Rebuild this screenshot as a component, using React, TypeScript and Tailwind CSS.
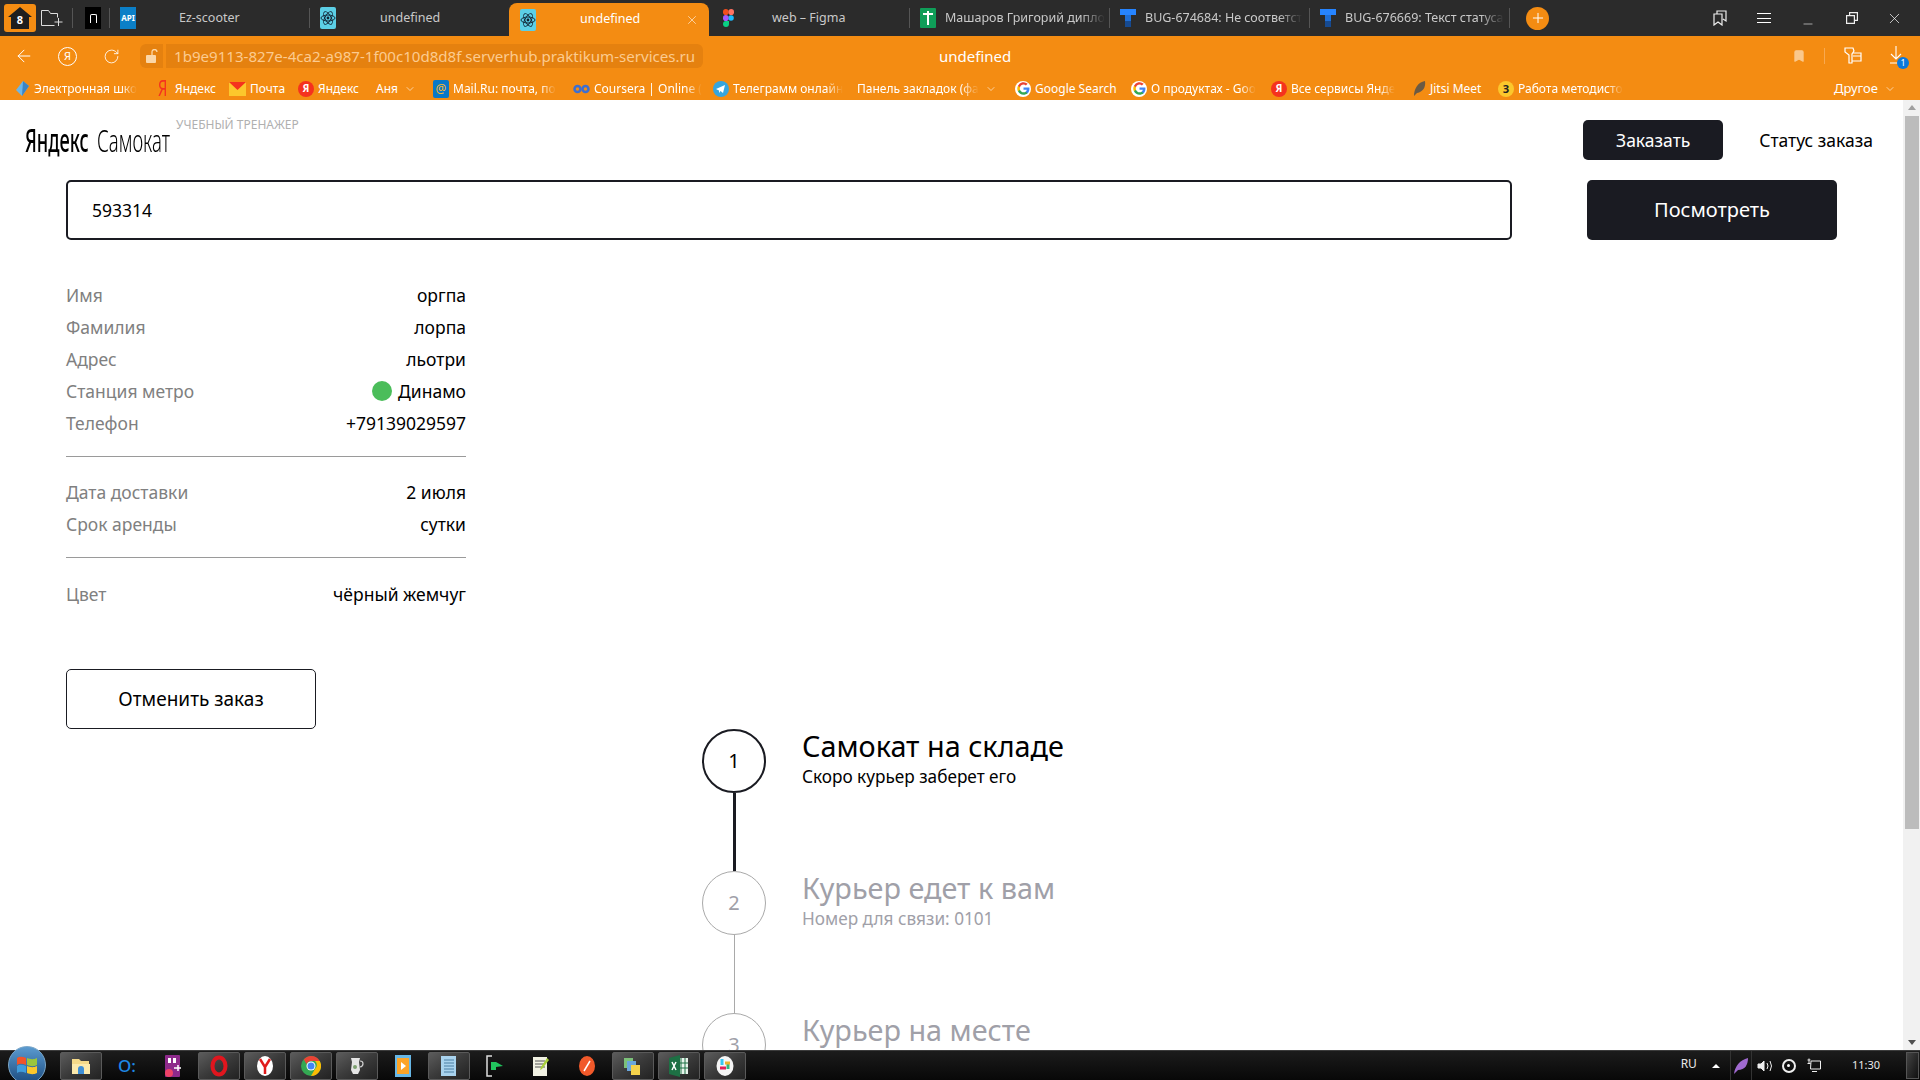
import { ArrowLeft, Bookmark, ChevronDown, Minus, Plus, RotateCw, X } from "lucide-react";
import type { ReactNode } from "react";

const UI_FONT = "font-['Noto_Sans',sans-serif]";
const FADE = "[mask-image:linear-gradient(to_right,black_85%,transparent)]";

function ReactIcon() {
  return (
    <svg width="16" height="22" viewBox="0 0 16 22">
      <rect width="16" height="22" rx="2" fill="#5ccfe6" />
      <g fill="none" stroke="#123" strokeWidth="0.9">
        <ellipse cx="8" cy="11" rx="7" ry="3" />
        <ellipse cx="8" cy="11" rx="7" ry="3" transform="rotate(60 8 11)" />
        <ellipse cx="8" cy="11" rx="7" ry="3" transform="rotate(120 8 11)" />
      </g>
      <circle cx="8" cy="11" r="1.4" fill="#123" />
    </svg>
  );
}

function FigmaIcon() {
  return (
    <svg width="11" height="18" viewBox="0 0 11 18">
      <circle cx="8" cy="9" r="2.8" fill="#1abcfe" />
      <path d="M3 12h3v3a3 3 0 1 1-3-3z" fill="#0acf83" />
      <rect y="6" width="5.6" height="6" rx="2.8" fill="#a259ff" />
      <rect width="5.6" height="6" rx="2.8" fill="#f24e1e" />
      <rect x="5.4" width="5.6" height="6" rx="2.8" fill="#ff7262" />
    </svg>
  );
}

function SheetIcon() {
  return (
    <svg width="16" height="20" viewBox="0 0 16 20">
      <rect width="16" height="20" rx="1" fill="#0f9d58" />
      <path d="M3 6h10M8 3v14" stroke="#fff" strokeWidth="2" />
    </svg>
  );
}

function TrackerIcon() {
  return (
    <svg width="16" height="18" viewBox="0 0 16 18">
      <rect width="16" height="6" fill="#2684ff" />
      <rect x="5" y="6" width="6" height="6" fill="#1f6fd6" />
      <rect x="5" y="12" width="6" height="6" fill="#164a91" />
    </svg>
  );
}

type Tab = { title: string; icon: ReactNode; textClass: string };

const tabs: Tab[] = [
  {
    title: "Ez-scooter",
    icon: (
      <span className="flex h-[22px] w-4 items-center justify-center bg-[#0b7fc7] text-[8px] font-bold text-white">API</span>
    ),
    textClass: "ml-[43px]",
  },
  { title: "undefined", icon: <ReactIcon />, textClass: "ml-[44px]" },
];

const rightTabs: Tab[] = [
  { title: "Машаров Григорий дипло", icon: <SheetIcon />, textClass: `ml-[9px] ${FADE}` },
  { title: "BUG-674684: Не соответст", icon: <TrackerIcon />, textClass: `ml-[9px] ${FADE}` },
  { title: "BUG-676669: Текст статуса", icon: <TrackerIcon />, textClass: `ml-[9px] ${FADE}` },
];

function TabItem({ tab }: { tab: Tab }) {
  return (
    <div className="flex h-[36px] w-[199px] shrink-0 items-center pl-[10px]">
      <div className="flex w-4 shrink-0 justify-center">{tab.icon}</div>
      <span className={`whitespace-nowrap pt-px text-[12.5px] text-[#c9c9c9] ${tab.textClass}`}>{tab.title}</span>
    </div>
  );
}

function Sep() {
  return <div className="h-5 w-px shrink-0 bg-[#555]" />;
}

function TabBar() {
  return (
    <div className={`flex h-[36px] shrink-0 items-center bg-[#2b2b2b] ${UI_FONT}`}>
      <div className="ml-1 flex h-7 w-8 items-center justify-center rounded-[3px] bg-[#f48c12]">
        <svg width="26" height="24" viewBox="0 0 26 24">
          <path d="M13 1 25 11h-3v12H4V11H1z" fill="#1e1e1e" />
          <text x="13" y="18" textAnchor="middle" fontSize="11" fontWeight="700" fill="#fff" fontFamily="Noto Sans">8</text>
        </svg>
      </div>
      <svg className="ml-[5px]" width="22" height="18" viewBox="0 0 22 18" fill="none" stroke="#ddd" strokeWidth="1">
        <path d="M.5 16.500V1.500h7l2 3h7v4M.5 16.500h13M17.500 9v8M13.500 13h8" />
      </svg>
      <div className="ml-[9px]"><Sep /></div>
      <div className="ml-3 flex h-[22px] w-4 items-center justify-center bg-black">
        <div className="h-[9px] w-[7px] rounded-t-[2px] border-x border-t border-white" />
      </div>
      <div className="ml-2"><Sep /></div>
      <TabItem tab={tabs[0]} />
      <Sep />
      <TabItem tab={tabs[1]} />
      <div className="mt-[3px] flex h-[33px] w-[200px] shrink-0 items-center rounded-t-[8px] bg-[#f48c12] pl-[11px]">
        <ReactIcon />
        <span className="ml-[44px] text-[12.5px] text-white">undefined</span>
        <X className="ml-auto mr-[10px] h-[14px] w-[14px] text-white" strokeWidth={1} />
      </div>
      <div className="flex h-[36px] w-[200px] shrink-0 items-center pl-[14px]">
        <FigmaIcon />
        <span className="ml-[38px] pt-px text-[12.5px] text-[#c9c9c9]">web – Figma</span>
      </div>
      {rightTabs.map((t) => (
        <div key={t.title} className="flex items-center">
          <Sep />
          <TabItem tab={t} />
        </div>
      ))}
      <Sep />
      <div className="ml-[16px] flex h-[23px] w-[23px] items-center justify-center rounded-full bg-[#f48c12]">
        <Plus className="h-4 w-4 text-white" strokeWidth={1.5} />
      </div>
      <div className="ml-auto flex items-center pr-[2px] text-white">
        <div className="flex w-[44px] justify-center">
          <svg width="14" height="16" viewBox="0 0 14 16" fill="none" stroke="#eee" strokeWidth="1.2">
            <path d="M1 4h8v11L5 12l-4 3zM4 4V1h9v10l-3-2" />
          </svg>
        </div>
        <div className="flex w-[44px] justify-center">
          <div className="flex h-[10px] w-[14px] flex-col justify-between">
            <div className="h-px bg-white" />
            <div className="h-px bg-white" />
            <div className="h-px bg-white" />
          </div>
        </div>
        <div className="flex w-[44px] justify-center">
          <Minus className="mt-3 h-[14px] w-[14px]" strokeWidth={1} />
        </div>
        <div className="flex w-[44px] justify-center">
          <svg width="12" height="12" viewBox="0 0 12 12" fill="none" stroke="#eee" strokeWidth="1.2">
            <path d="M.6 3.600h7.800v7.800H.6zM3.600 3.600V.6h7.800v7.800H8.400" />
          </svg>
        </div>
        <div className="flex w-[44px] justify-center pr-[4px]">
          <X className="h-[17px] w-[17px]" strokeWidth={1} />
        </div>
      </div>
    </div>
  );
}

function AddressBar() {
  return (
    <div className={`flex h-[40px] shrink-0 items-center bg-[#f48c12] pl-[14px] ${UI_FONT}`}>
      <ArrowLeft className="h-5 w-5 text-white" strokeWidth={1.2} />
      <div className="ml-[24px] flex h-[19px] w-[19px] items-center justify-center rounded-full border border-white text-[11px] text-white">Я</div>
      <RotateCw className="ml-[26px] h-[17px] w-[17px] text-white" strokeWidth={1.2} />
      <div className="ml-[20px] flex h-6 w-[23px] items-center justify-center rounded-l-[6px] bg-[#e5810f]">
        <svg width="12" height="14" viewBox="0 0 12 14">
          <rect y="6" width="10" height="8" rx="1" fill="#fbd7a8" />
          <path d="M6 6V3a2.500 2.500 0 0 1 5 0" fill="none" stroke="#fbd7a8" strokeWidth="1.300" />
        </svg>
      </div>
      <div className="ml-[3px] flex h-6 w-[537px] items-center overflow-hidden rounded-r-[6px] bg-[#e5810f] pl-2 text-[15.1px] text-[#fccb8f]">
        1b9e9113-827e-4ca2-a987-1f00c10d8d8f.serverhub.praktikum-services.ru
      </div>
      <span className="ml-[236px] text-[15px] text-white">undefined</span>
      <div className="ml-auto flex items-center pr-[17px]">
        <Bookmark className="h-[16px] w-[14px] fill-[#fac88c] text-[#fac88c]" />
        <div className="ml-[18px] h-[16px] w-px bg-[#f8a950]" />
        <svg className="ml-[19px]" width="18" height="18" viewBox="0 0 18 18" fill="none" stroke="#fff" strokeWidth="1.2">
          <path d="M1 1h8l1 3-2 3v9H5V8L1 5zM9 6h8v8h-9M9 9h8" />
        </svg>
        <div className="relative ml-[27px] flex h-5 w-[14px] flex-col items-center">
          <svg width="14" height="18" viewBox="0 0 14 18" fill="none" stroke="#fff" strokeWidth="1.1">
            <path d="M7 0v13M2 8l5 5 5-5M1 17h11" />
          </svg>
          <div className="absolute left-[8px] top-[11px] flex h-3 w-3 items-center justify-center rounded-full bg-[#0a78dc] text-[9px] text-white">1</div>
        </div>
      </div>
    </div>
  );
}

function YaIcon({ round }: { round?: boolean }) {
  if (round) {
    return (
      <div className="flex h-4 w-4 items-center justify-center rounded-full bg-[#f5321e] text-[10px] font-bold text-white">Я</div>
    );
  }
  return <span className="inline-block w-[13px] origin-left scale-x-[0.7] text-[21px] leading-none text-[#f5321e]">Я</span>;
}

function GoogleIcon() {
  return (
    <div className="flex h-4 w-4 items-center justify-center rounded-full bg-white">
      <svg width="13" height="13" viewBox="0 0 24 24">
        <path d="M23 12.300c0-.8-.1-1.600-.2-2.300H12v4.400h6.200a5.300 5.300 0 0 1-2.300 3.500v2.900h3.700c2.200-2 3.400-5 3.400-8.500z" fill="#4285f4" />
        <path d="M12 23.500c3.100 0 5.700-1 7.600-2.800l-3.700-2.900c-1 .7-2.400 1.100-3.900 1.100-3 0-5.500-2-6.400-4.800H1.800v3A11.500 11.500 0 0 0 12 23.500z" fill="#34a853" />
        <path d="M5.600 14.100a6.900 6.900 0 0 1 0-4.400v-3H1.800a11.500 11.500 0 0 0 0 10.400z" fill="#fbbc05" />
        <path d="M12 4.800c1.700 0 3.200.6 4.400 1.700l3.300-3.300A11.500 11.500 0 0 0 1.800 6.700l3.800 3c.9-2.800 3.400-4.900 6.400-4.900z" fill="#ea4335" />
      </svg>
    </div>
  );
}

type Mark = { label: string; width: string; icon?: ReactNode; fade?: boolean; chevron?: boolean };

const marks: Mark[] = [
  {
    label: "Электронная шко",
    width: "w-[143px]",
    fade: true,
    icon: (
      <svg width="15" height="17" viewBox="0 0 15 17">
        <path d="M8 1l6 5-7 10-6-6z" fill="#6bb6e8" />
        <path d="M8 1l6 5-7 10z" fill="#3b84c4" />
      </svg>
    ),
  },
  { label: "Яндекс", width: "w-[71px]", icon: <YaIcon /> },
  {
    label: "Почта",
    width: "w-[69px]",
    icon: (
      <svg width="17" height="14" viewBox="0 0 17 14">
        <rect width="17" height="14" fill="#fcc72c" />
        <path d="M0 0h17L8.500 8z" fill="#f5321e" />
      </svg>
    ),
  },
  { label: "Яндекс", width: "w-[78px]", icon: <YaIcon round /> },
  { label: "Аня", width: "w-[57px]", chevron: true },
  {
    label: "Mail.Ru: почта, по",
    width: "w-[140px]",
    fade: true,
    icon: (
      <div className="flex h-[18px] w-4 items-center justify-center rounded-[2px] bg-[#0a78c8] text-[12px] leading-none text-[#fcb82c]">@</div>
    ),
  },
  {
    label: "Coursera | Online (",
    width: "w-[140px]",
    fade: true,
    icon: (
      <svg width="17" height="10" viewBox="0 0 17 10" fill="none" stroke="#3d6fd1" strokeWidth="2.500">
        <circle cx="4.500" cy="5" r="3" />
        <circle cx="12.500" cy="5" r="3" />
      </svg>
    ),
  },
  {
    label: "Телеграмм онлайн",
    width: "w-[144px]",
    fade: true,
    icon: (
      <svg width="16" height="16" viewBox="0 0 16 16">
        <circle cx="8" cy="8" r="8" fill="#36a5de" />
        <path d="M3 8l9-4-2 8-2.500-2L6 12V9.500z" fill="#fff" />
      </svg>
    ),
  },
  { label: "Панель закладок (фа", width: "w-[158px]", fade: true, chevron: true },
  { label: "Google Search", width: "w-[116px]", icon: <GoogleIcon /> },
  { label: "О продуктах - Goo", width: "w-[140px]", fade: true, icon: <GoogleIcon /> },
  { label: "Все сервисы Янде", width: "w-[142px]", fade: true, icon: <YaIcon round /> },
  {
    label: "Jitsi Meet",
    width: "w-[85px]",
    icon: (
      <svg width="13" height="17" viewBox="0 0 13 17">
        <path d="M1 16C1 9 5 2 12 1c1 6-2 11-8 12z" fill="#6b5a44" />
      </svg>
    ),
  },
  {
    label: "Работа методисто",
    width: "w-[130px]",
    fade: true,
    icon: (
      <div className="flex h-4 w-4 items-center justify-center rounded-full bg-[#fcc72c] text-[11px] font-bold leading-none text-[#222]">З</div>
    ),
  },
];

function BookmarksBar() {
  return (
    <div className={`flex h-[24px] shrink-0 items-center bg-[#f48c12] pl-[15px] pr-[24px] pt-px text-[12px] text-white ${UI_FONT}`}>
      {marks.map((m, i) => (
        <div key={i} className={`flex shrink-0 items-center gap-1 ${m.width}`}>
          {m.icon}
          <span className={`whitespace-nowrap ${m.fade ? FADE : ""}`}>{m.label}</span>
          {m.chevron && <ChevronDown className="ml-[2px] h-3 w-3" strokeWidth={1.2} />}
        </div>
      ))}
      <div className="ml-auto flex items-center gap-[6px] text-[13px]">
        Другое
        <ChevronDown className="h-3 w-3" strokeWidth={1.2} />
      </div>
    </div>
  );
}

function Row({ label, children }: { label: string; children: ReactNode }) {
  return (
    <div className="flex h-8 items-center justify-between">
      <span className="text-[#808080]">{label}</span>
      <span className="flex items-center text-black">{children}</span>
    </div>
  );
}

function Step({ num, title, sub, active, last }: { num: string; title: string; sub?: string; active?: boolean; last?: boolean }) {
  return (
    <div className="flex">
      <div className="flex w-[64px] flex-col items-center">
        <div
          className={
            active
              ? "flex h-16 w-16 shrink-0 items-center justify-center rounded-full border-2 border-[#1a1b22] text-[20px] text-black"
              : "flex h-16 w-16 shrink-0 items-center justify-center rounded-full border border-[#a9a9a9] text-[20px] text-[#a0a0a8]"
          }
        >
          {num}
        </div>
        {!last && <div className={active ? "h-[78px] w-[3px] bg-[#1a1b22]" : "h-[78px] w-px bg-[#a9a9a9]"} />}
      </div>
      <div className={active ? "ml-[36px] text-black" : "ml-[36px] text-[#a0a0a8]"}>
        <div className="-mt-[2px] text-[28.8px] leading-[38px]">{title}</div>
        {sub && <div className="text-[17.2px] leading-[24px]">{sub}</div>}
      </div>
    </div>
  );
}

function Page() {
  return (
    <div className={`min-h-0 flex-1 overflow-hidden bg-white ${UI_FONT}`}>
      <div className="flex h-full">
        <div className="min-w-0 flex-1 overflow-hidden">
          <div className="flex h-[80px]">
            <div className="flex pl-[25px] pt-[24px] text-black">
              <div className="flex h-8 w-[145px] items-center whitespace-nowrap text-[32px] leading-none">
                <span className="inline-block w-[63px] origin-left scale-x-[0.57] font-medium">Яндекс</span>
                <span className="ml-[9px] inline-block origin-left scale-x-[0.58] font-light">Самокат</span>
              </div>
              <span className="-mt-[8px] ml-[6px] text-[12px] text-[#b0b0b0]">УЧЕБНЫЙ ТРЕНАЖЕР</span>
            </div>
            <div className="ml-auto flex items-start pr-[30px] pt-[20px]">
              <button className="h-10 w-[140px] rounded-[5px] bg-[#1a1b22] text-[17.5px] text-white">Заказать</button>
              <button className="ml-9 h-10 text-[17.5px] text-black">Статус заказа</button>
            </div>
          </div>
          <div className="flex pl-[66px]">
            <div className="flex h-[60px] w-[1446px] items-center rounded-[5px] border-2 border-[#1a1b22] pl-[24px] text-[17.5px] text-black">593314</div>
            <button className="ml-[75px] h-[60px] w-[250px] rounded-[5px] bg-[#1a1b22] text-[20px] text-white">Посмотреть</button>
          </div>
          <div className="ml-[66px] mt-[39px] w-[400px] text-[17.5px]">
            <Row label="Имя">оргпа</Row>
            <Row label="Фамилия">лорпа</Row>
            <Row label="Адрес">льотри</Row>
            <Row label="Станция метро">
              <span className="mr-[6px] h-5 w-5 rounded-full bg-[#4bbd5a]" />
              Динамо
            </Row>
            <Row label="Телефон">+79139029597</Row>
            <div className="mb-[19px] mt-[17px] h-px bg-[#9a9a9a]" />
            <Row label="Дата доставки">2 июля</Row>
            <Row label="Срок аренды">сутки</Row>
            <div className="mb-[20px] mt-[17px] h-px bg-[#9a9a9a]" />
            <Row label="Цвет">чёрный жемчуг</Row>
          </div>
          <button className="ml-[66px] mt-[59px] h-[60px] w-[250px] rounded-[5px] border border-[#1a1b22] text-[19px] text-black">Отменить заказ</button>
          <div className="ml-[702px]">
            <Step num="1" title="Самокат на складе" sub="Скоро курьер заберет его" active />
            <Step num="2" title="Курьер едет к вам" sub="Номер для связи: 0101" />
            <Step num="3" title="Курьер на месте" last />
          </div>
        </div>
        <div className="flex w-[17px] shrink-0 flex-col items-center bg-[#f1f1f1]">
          <div className="mt-[5px] h-0 w-0 border-x-[4px] border-b-[5px] border-x-transparent border-b-[#a0a0a0]" />
          <div className="mt-[6px] h-[713px] w-[14px] bg-[#bcbcbc]" />
          <div className="mt-auto mb-[5px] h-0 w-0 border-x-[4px] border-t-[5px] border-x-transparent border-t-[#505050]" />
        </div>
      </div>
    </div>
  );
}

type Task = { framed?: boolean; icon: ReactNode };

const taskItems: Task[] = [
  {
    framed: true,
    icon: (
      <svg width="20" height="20" viewBox="0 0 20 20">
        <path d="M1 3h7l2 2h8v13H1z" fill="#f4d989" />
        <rect x="1" y="8" width="18" height="10" fill="#fbe9ac" />
        <path d="M7 18v-5a3 3 0 0 1 6 0v5z" fill="#3f8fd6" />
      </svg>
    ),
  },
  { icon: <span className="text-[17px] font-medium leading-none text-[#1e88e5]">O:</span> },
  {
    icon: (
      <svg width="18" height="22" viewBox="0 0 18 22">
        <rect x="1" width="15" height="22" rx="1" fill="#8e2a8b" />
        <rect x="4" y="3" width="3" height="5" fill="#fff" />
        <rect x="9" y="3" width="3" height="5" fill="#fff" />
        <circle cx="5" cy="18" r="4" fill="#ee4266" />
        <path d="M10 13h7M14 10v6" stroke="#fff" strokeWidth="1.500" />
      </svg>
    ),
  },
  {
    framed: true,
    icon: (
      <svg width="18" height="22" viewBox="0 0 18 22" fill="none">
        <ellipse cx="9" cy="11" rx="6.500" ry="8.500" stroke="#e0161e" strokeWidth="4" />
      </svg>
    ),
  },
  {
    framed: true,
    icon: (
      <svg width="20" height="22" viewBox="0 0 20 22">
        <ellipse cx="10" cy="11" rx="8" ry="10" fill="#fff" />
        <path d="M5 4l5 8v7M15 4l-5 8" stroke="#e01b1b" strokeWidth="2.500" fill="none" />
      </svg>
    ),
  },
  {
    framed: true,
    icon: (
      <svg width="20" height="20" viewBox="0 0 20 20">
        <circle cx="10" cy="10" r="10" fill="#34a853" />
        <path d="M10 0a10 10 0 0 1 8.700 5H10a5 5 0 0 0-4.500 3L2.800 3.500A10 10 0 0 1 10 0z" fill="#ea4335" />
        <path d="M18.700 5A10 10 0 0 1 10 20l4.300-7.500A5 5 0 0 0 14 5z" fill="#fbbc05" />
        <circle cx="10" cy="10" r="4.500" fill="#fff" />
        <circle cx="10" cy="10" r="3.500" fill="#4285f4" />
      </svg>
    ),
  },
  {
    framed: true,
    icon: (
      <svg width="18" height="20" viewBox="0 0 18 20" fill="none">
        <path d="M3 2h9l-1 4 1 8-2 4H5l-2-4 1-8z" fill="#e5e5e5" />
        <path d="M12 5c4 0 4 5 0 6" stroke="#cfcfcf" strokeWidth="1.200" />
        <circle cx="7" cy="11" r="2" fill="#7da06f" />
      </svg>
    ),
  },
  {
    icon: (
      <svg width="16" height="22" viewBox="0 0 16 22">
        <rect width="16" height="22" fill="#67b7e6" />
        <rect x="2" y="3" width="12" height="16" fill="#fca428" />
        <path d="M6 7l5 4-5 4z" fill="#fff" />
      </svg>
    ),
  },
  {
    framed: true,
    icon: (
      <svg width="18" height="22" viewBox="0 0 18 22">
        <rect x="1" y="1" width="15" height="20" fill="#a9d3ee" />
        <path d="M4 5h10M4 8h10M4 11h10M4 14h10M4 17h10" stroke="#4b7ea3" strokeWidth="1" />
      </svg>
    ),
  },
  {
    icon: (
      <svg width="18" height="22" viewBox="0 0 18 22" fill="none">
        <path d="M6 1H1v20h5" stroke="#ddd" strokeWidth="1.500" />
        <path d="M5 7h5l7 4-7 1v3H5z" fill="#22c55e" />
      </svg>
    ),
  },
  {
    icon: (
      <svg width="18" height="22" viewBox="0 0 18 22">
        <rect x="1" y="2" width="14" height="19" fill="#f1f1e3" />
        <path d="M3 6h10M3 9h10M3 12h10" stroke="#555" />
        <path d="M15 3l2 2-7 9-2 1 1-3z" fill="#a8d039" />
      </svg>
    ),
  },
  {
    icon: (
      <svg width="18" height="22" viewBox="0 0 18 22">
        <ellipse cx="9" cy="11" rx="8" ry="10" fill="#f1592a" />
        <path d="M6 16l6-10" stroke="#fff" strokeWidth="1.500" />
      </svg>
    ),
  },
  {
    framed: true,
    icon: (
      <svg width="20" height="22" viewBox="0 0 20 22">
        <rect x="1" y="3" width="9" height="10" fill="#7cc17a" />
        <rect x="4" y="6" width="9" height="10" fill="#6aa7dc" />
        <rect x="8" y="10" width="9" height="10" fill="#f4d24b" />
      </svg>
    ),
  },
  {
    framed: true,
    icon: (
      <svg width="20" height="22" viewBox="0 0 20 22">
        <rect x="7" y="3" width="12" height="16" fill="#e8f3ec" />
        <path d="M12 3v16M16 3v16M7 8h12M7 13h12" stroke="#1d7044" />
        <path d="M0 3l11-3v22L0 19z" fill="#1d7044" />
        <path d="M3 7l4 8M7 7l-4 8" stroke="#fff" strokeWidth="1.500" />
      </svg>
    ),
  },
  {
    framed: true,
    icon: (
      <svg width="18" height="22" viewBox="0 0 18 22">
        <ellipse cx="9" cy="11" rx="8.500" ry="10" fill="#f5f5f5" />
        <path d="M6 4v6" stroke="#36c5f0" strokeWidth="3" />
        <path d="M4 13h6" stroke="#e01e5a" strokeWidth="3" />
        <path d="M12 8v6" stroke="#2eb67d" strokeWidth="3" />
        <path d="M9 8h5" stroke="#ecb22e" strokeWidth="3" />
      </svg>
    ),
  },
];

function Taskbar() {
  return (
    <div className={`flex h-[30px] shrink-0 items-center border-t border-[#3c3c3c] bg-gradient-to-b from-[#1c1c1c] to-[#080808] ${UI_FONT}`}>
      <div className="relative ml-2 h-full w-[50px]">
        <div className="absolute -top-[5px] left-0 flex h-[38px] w-[38px] items-center justify-center rounded-full border border-[#7aa6c8] bg-gradient-to-b from-[#5b9bd0] to-[#1c4c80]">
          <svg width="22" height="20" viewBox="0 0 22 20">
            <path d="M1 3c3-2 6-1 9 0v7c-3-1-6-2-9 0z" fill="#f0542a" />
            <path d="M11 3c3 1 6 2 10 0v7c-4 2-7 1-10 0z" fill="#9bc53d" />
            <path d="M1 11c3-2 6-1 9 0v7c-3-1-6-2-9 0z" fill="#3f9cdc" />
            <path d="M11 11c3 1 6 2 10 0v7c-4 2-7 1-10 0z" fill="#fcc72c" />
          </svg>
        </div>
      </div>
      {taskItems.map((t, i) => (
        <div key={i} className="flex h-full w-[46px] shrink-0 items-center justify-center">
          {t.framed ? (
            <div className="flex h-[28px] w-[42px] items-center justify-center rounded-[2px] border border-[#5a5a5a] bg-gradient-to-br from-[#5c5c5c] via-[#3a3a3a] to-[#222]">{t.icon}</div>
          ) : (
            t.icon
          )}
        </div>
      ))}
      <div className="ml-auto flex h-full items-center text-[12px] text-[#e8e8e8]">
        <span className="-mt-[4px]">RU</span>
        <div className="ml-[15px] mt-[1px] h-0 w-0 border-x-[4px] border-b-[4px] border-x-transparent border-b-white" />
        <div className="ml-[10px] flex h-full w-[22px] items-center justify-center border-x border-[#333]">
          <svg width="16" height="18" viewBox="0 0 16 18">
            <path d="M1 17C2 9 7 3 15 1c0 7-3 12-10 12z" fill="#a06ad0" />
          </svg>
        </div>
        <svg className="ml-[5px]" width="16" height="14" viewBox="0 0 16 14" fill="none" stroke="#eee">
          <path d="M1 5h3l3-3v10L4 9H1z" fill="#eee" />
          <path d="M10 4q2 3 0 6M13 2q3 5 0 10" />
        </svg>
        <div className="ml-[9px] flex h-[14px] w-[14px] items-center justify-center rounded-full border-2 border-[#eee]">
          <div className="h-[3px] w-[3px] rounded-full bg-white" />
        </div>
        <svg className="ml-[11px]" width="14" height="15" viewBox="0 0 14 15" fill="none" stroke="#eee">
          <path d="M2 .5v5M.5 2h3M.5 5.500h3M4 3h9.500v8h-10zM5 13.500h5" />
        </svg>
        <span className="ml-[31px] text-[11px]">11:30</span>
        <div className="ml-[26px] mr-px h-[27px] w-[13px] border border-[#555] bg-gradient-to-br from-[#444] to-[#111]" />
      </div>
    </div>
  );
}

export default function App() {
  return (
    <div className="flex h-screen w-full flex-col overflow-hidden bg-white">
      <TabBar />
      <AddressBar />
      <BookmarksBar />
      <Page />
      <Taskbar />
    </div>
  );
}
